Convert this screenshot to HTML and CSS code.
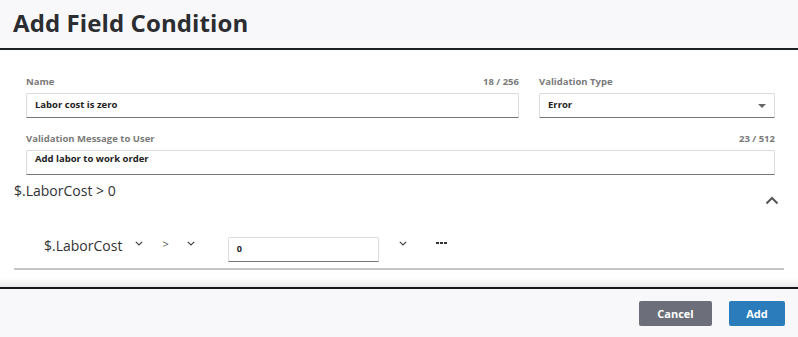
FILE: index.html
```html
<!DOCTYPE html>
<html>
<head>
<meta charset="utf-8">
<link rel="stylesheet" href="styles.css">
</head>
<body>
<div class="dialog">
  <header class="head"><h1 class="title">Add Field Condition</h1></header>
  <main class="body">
    <div class="row-fields">
      <div class="field name">
        <div class="label-row"><span class="label">Name</span><span class="count">18 / 256</span></div>
        <div class="input">Labor cost is zero</div>
      </div>
      <div class="field type">
        <div class="label-row"><span class="label">Validation Type</span></div>
        <div class="input select">Error<span class="tri"></span></div>
      </div>
    </div>
    <div class="field msg">
      <div class="label-row"><span class="label">Validation Message to User</span><span class="count">23 / 512</span></div>
      <div class="input area">Add labor to work order</div>
    </div>
    <div class="summary">
      <span class="expr">$.LaborCost &gt; 0</span>
      <svg class="up" width="14" height="9" viewBox="0 0 14 9"><path d="M1.5 7.5 L7 2 L12.5 7.5" fill="none" stroke="#555" stroke-width="2"/></svg>
    </div>
    <div class="cond">
      <span class="fieldname">$.LaborCost</span>
      <svg class="chev c1" width="8" height="5" viewBox="0 0 8 5"><path d="M0.8 0.8 L4 4 L7.2 0.8" fill="none" stroke="#444" stroke-width="1.2"/></svg>
      <span class="op">&gt;</span>
      <svg class="chev c2" width="8" height="5" viewBox="0 0 8 5"><path d="M0.8 0.8 L4 4 L7.2 0.8" fill="none" stroke="#444" stroke-width="1.2"/></svg>
      <div class="input val">0</div>
      <svg class="chev c3" width="8" height="5" viewBox="0 0 8 5"><path d="M0.8 0.8 L4 4 L7.2 0.8" fill="none" stroke="#444" stroke-width="1.2"/></svg>
      <span class="more"><i></i><i></i><i></i></span>
    </div>
    <div class="rule"></div>
  </main>
  <footer class="foot">
    <button class="btn cancel">Cancel</button>
    <button class="btn add">Add</button>
  </footer>
</div>
</body>
</html>
```

FILE: styles.css
```css
* { box-sizing: border-box; }
html, body { margin: 0; padding: 0; }
body {
  width: 798px;
  height: 337px;
  overflow: hidden;
  font-family: "Open Sans", "Liberation Sans", sans-serif;
  background: #fff;
  color: #222;
}
.dialog { display: flex; flex-direction: column; height: 337px; }
.head {
  height: 50px;
  background: #f8f8fa;
  border-bottom: 2px solid #1e2124;
  display: flex;
  align-items: center;
  padding-left: 13px;
}
.title {
  margin: 0;
  font-size: 24px;
  font-weight: 700;
  color: #2b2d31;
  letter-spacing: 0.1px;
  position: relative;
  top: -2px;
}
.body {
  height: 237px;
  background: #fff;
  padding: 25px 0 0 0;
  box-shadow: inset 0 -12px 10px -10px rgba(0,0,0,0.12);
}
.row-fields { display: flex; gap: 20px; padding-left: 26px; }
.field.name { width: 493px; }
.field.type { width: 236px; }
.field.msg { margin-left: 26px; width: 749px; margin-top: 14px; }
.label-row {
  display: flex;
  justify-content: space-between;
  height: 18px;
  font-size: 9.5px;
  font-weight: 700;
  color: #7a7a7a;
  line-height: 14px;
}
.input {
  height: 25px;
  border: 1px solid #dcdcdc;
  border-bottom: 1px solid #777;
  border-radius: 2px 2px 0 0;
  font-size: 9.5px;
  font-weight: 700;
  color: #222;
  padding: 0 8px;
  line-height: 22px;
  position: relative;
}
.input.area { line-height: 14px; padding-top: 1px; }
.select .tri {
  position: absolute;
  right: 8px;
  top: 10px;
  width: 0; height: 0;
  border-left: 4px solid transparent;
  border-right: 4px solid transparent;
  border-top: 4px solid #666;
}
.summary {
  display: flex;
  justify-content: space-between;
  margin-top: 7px;
  height: 44px;
  padding: 0 19px 0 14px;
}
.expr { font-size: 14px; color: #333; line-height: 18px; }
.up { margin-top: 14px; }
.cond {
  display: flex;
  align-items: flex-start;
  height: 42px;
  padding-left: 44px;
}
.fieldname { font-size: 14px; color: #333; line-height: 19px; margin-top: 10px; }
.chev { display: block; margin-top: 15px; }
.c1 { margin-left: 13px; }
.op { font-size: 11px; color: #555; line-height: 15px; margin-left: 19px; margin-top: 10px; }
.c2 { margin-left: 18px; }
.input.val {
  width: 151px;
  margin-left: 33px;
  font-size: 9px;
  margin-top: 11px;
}
.c3 { margin-left: 20px; }
.more { margin-left: 29px; margin-top: 16px; display: flex; gap: 1px; }
.more i { display: block; width: 3px; height: 2px; background: #333; }
.rule { margin: 0 14px; height: 2px; background: #c6c6c6; }
.foot {
  flex: 1;
  background: #f8f8fa;
  border-top: 2px solid #14181c;
  display: flex;
  justify-content: flex-end;
  align-items: flex-start;
  padding: 12px 13px 0 0;
  gap: 17px;
}
.btn {
  height: 25px;
  border: none;
  border-radius: 2px;
  color: #fff;
  font-family: "Open Sans", "Liberation Sans", sans-serif;
  font-weight: 700;
  font-size: 11px;
}
.cancel { width: 73px; background: #6c6f79; }
.add { width: 56px; background: #2a7cbb; }
```
